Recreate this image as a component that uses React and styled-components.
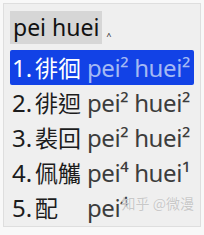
import React from 'react';
import styled, { createGlobalStyle } from 'styled-components';

const Global = createGlobalStyle`
  html, body {
    margin: 0;
    padding: 0;
    background: #f8f8f8;
  }
  body {
    font-family: "Noto Sans", "Noto Sans CJK TC", sans-serif;
  }
`;

const Frame = styled.div`
  width: 204px;
  height: 235px;
  padding: 3px;
  box-sizing: border-box;
  position: relative;
`;

const Win = styled.div`
  width: 198px;
  height: 224px;
  box-sizing: border-box;
  background: #efefef;
  border: 1px solid #dedede;
  padding: 7px 6px 0 6px;
  display: flex;
  flex-direction: column;
  gap: 6px;
`;

const PreeditRow = styled.div`
  display: flex;
  align-items: flex-end;
  gap: 4px;
`;

const Preedit = styled.div`
  background: #d6d6d6;
  height: 33px;
  padding: 0 3px;
  display: flex;
  align-items: center;
  font-size: 23px;
  color: #111;
  line-height: 1;
`;

const Caret = styled.span`
  font-size: 12px;
  color: #333;
  margin-bottom: 6px;
`;

const List = styled.div`
  display: flex;
  flex-direction: column;
`;

const Row = styled.div`
  height: 35px;
  display: flex;
  align-items: center;
  padding-left: 2px;
  border-radius: 2px;
  font-size: 24px;
  line-height: 1;
  background: ${p => (p.$on ? '#1242e6' : 'transparent')};
  color: ${p => (p.$on ? '#ffffff' : '#1c1c1c')};
`;

const Num = styled.span`
  width: 23px;
  flex: none;
`;

const Chars = styled.span`
  width: 52px;
  flex: none;
  font-family: "Noto Sans CJK TC", sans-serif;
  font-size: 23px;
`;

const Pinyin = styled.span`
  color: ${p => (p.$on ? '#a4b9f4' : '#3c3c3c')};
  white-space: nowrap;
  letter-spacing: -0.4px;
`;

const Mark = styled.div`
  position: absolute;
  right: 10px;
  bottom: 22px;
  font-size: 14px;
  color: #c8c8c8;
  font-family: "Noto Sans CJK SC", sans-serif;
  text-shadow: 0 0 1px #fff;
`;

const rows = [
  ['1.', '徘徊', 'pei² huei²'],
  ['2.', '徘迴', 'pei² huei²'],
  ['3.', '裴回', 'pei² huei²'],
  ['4.', '佩觿', 'pei⁴ huei¹'],
  ['5.', '配', 'pei⁴'],
];

export default function App() {
  return (
    <Frame>
      <Global />
      <Win>
        <PreeditRow>
          <Preedit>pei huei</Preedit>
          <Caret>‸</Caret>
        </PreeditRow>
        <List>
          {rows.map(([n, c, p], i) => (
            <Row key={n} $on={i === 0}>
              <Num>{n}</Num>
              <Chars>{c}</Chars>
              <Pinyin $on={i === 0}>{p}</Pinyin>
            </Row>
          ))}
        </List>
      </Win>
      <Mark>知乎 @微漫</Mark>
    </Frame>
  );
}
